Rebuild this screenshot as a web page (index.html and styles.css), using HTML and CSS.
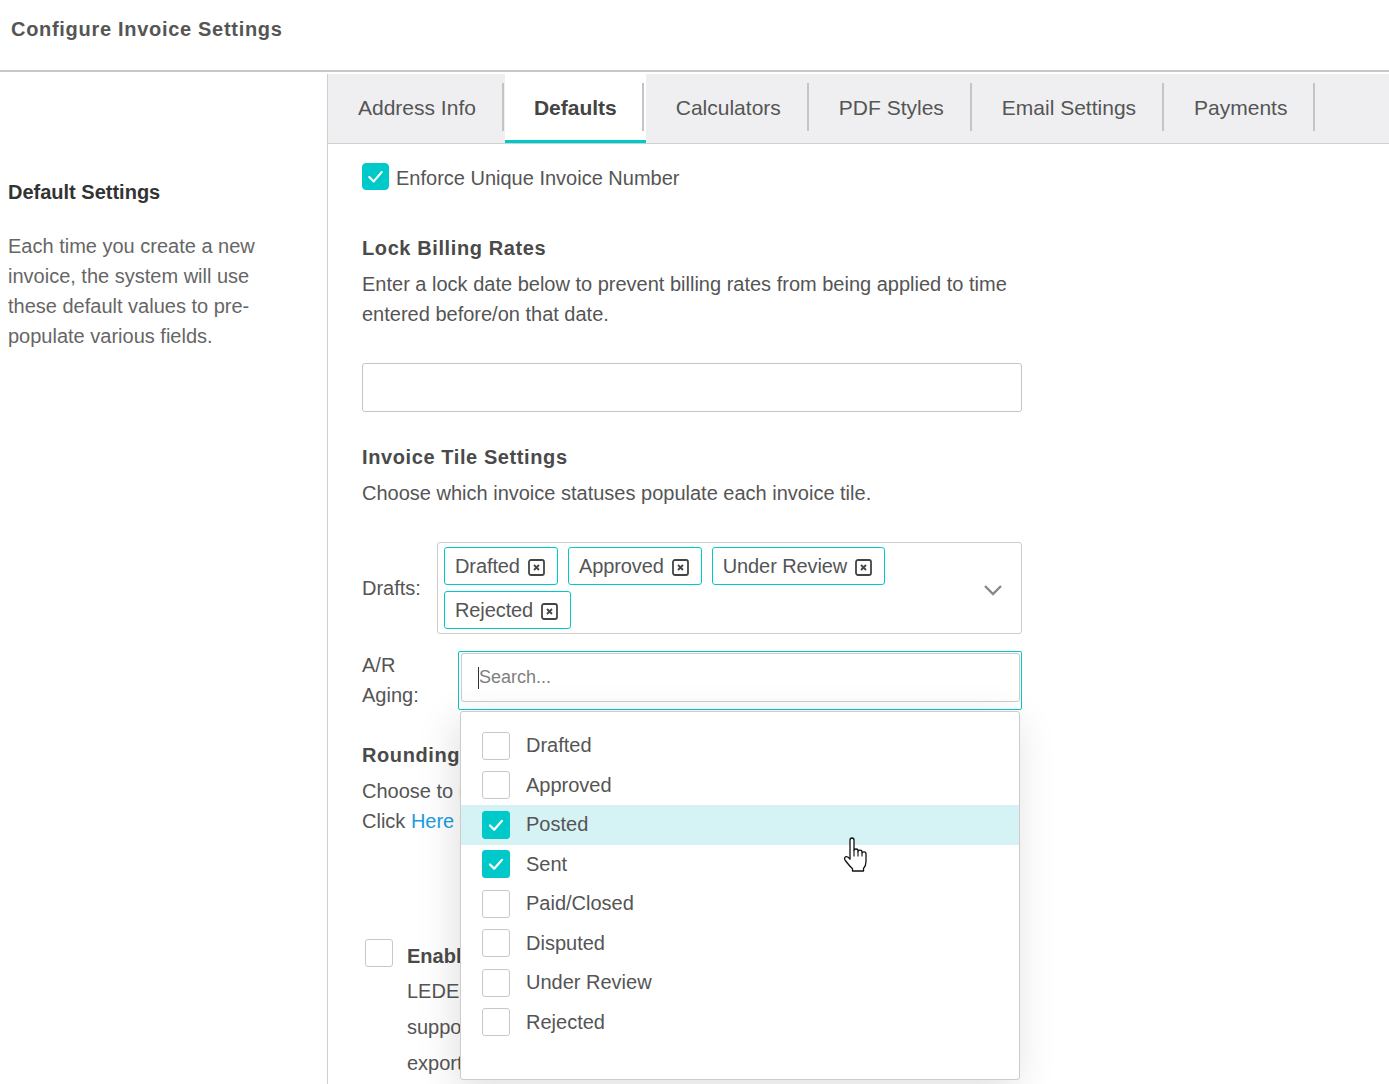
FILE: index.html
```html
<!DOCTYPE html>
<html lang="en">
<head>
<meta charset="utf-8">
<title>Configure Invoice Settings</title>
<link rel="stylesheet" href="styles.css">
</head>
<body>
<header class="page-header">
  <h1 class="page-title">Configure Invoice Settings</h1>
</header>
<div class="layout">
  <aside class="sidebar">
    <h2 class="side-title">Default Settings</h2>
    <p class="side-text">Each time you create a new invoice, the system will use these default values to pre-populate various fields.</p>
  </aside>
  <main class="main">
    <nav class="tabs">
      <div class="tab">Address Info</div><span class="sep"></span>
      <div class="tab active">Defaults<span class="sep sep-inner"></span></div>
      <div class="tab">Calculators</div><span class="sep"></span>
      <div class="tab">PDF Styles</div><span class="sep"></span>
      <div class="tab">Email Settings</div><span class="sep"></span>
      <div class="tab">Payments</div><span class="sep"></span>
    </nav>
    <div class="content">
      <label class="check-row">
        <span class="checkbox checked big"><svg viewBox="0 0 28 28"><polyline points="7,14.5 12,19.5 21,9"/></svg></span>
        <span class="check-label">Enforce Unique Invoice Number</span>
      </label>

      <h3 class="section-title first">Lock Billing Rates</h3>
      <p class="section-text">Enter a lock date below to prevent billing rates from being applied to time entered before/on that date.</p>
      <div class="text-input"></div>

      <h3 class="section-title">Invoice Tile Settings</h3>
      <p class="section-text">Choose which invoice statuses populate each invoice tile.</p>

      <div class="field-row drafts-row">
        <span class="field-label">Drafts:</span>
        <div class="multiselect">
          <div class="tags">
            <span class="tag">Drafted<svg class="tag-x" viewBox="0 0 17 17"><rect x="1" y="1" width="15" height="15" rx="2"/><path d="M6 6 L11 11 M11 6 L6 11"/></svg></span>
            <span class="tag">Approved<svg class="tag-x" viewBox="0 0 17 17"><rect x="1" y="1" width="15" height="15" rx="2"/><path d="M6 6 L11 11 M11 6 L6 11"/></svg></span>
            <span class="tag">Under Review<svg class="tag-x" viewBox="0 0 17 17"><rect x="1" y="1" width="15" height="15" rx="2"/><path d="M6 6 L11 11 M11 6 L6 11"/></svg></span>
            <span class="tag">Rejected<svg class="tag-x" viewBox="0 0 17 17"><rect x="1" y="1" width="15" height="15" rx="2"/><path d="M6 6 L11 11 M11 6 L6 11"/></svg></span>
          </div>
          <svg class="chevron" viewBox="0 0 20 12"><polyline points="2,2 10,10 18,2"/></svg>
        </div>
      </div>

      <div class="field-row ar-row">
        <span class="field-label">A/R Aging:</span>
        <div class="ar-select">
          <div class="search-box"><span class="caret"></span><span class="placeholder">Search...</span></div>
          <div class="dropdown">
            <div class="opt"><span class="checkbox"></span>Drafted</div>
            <div class="opt"><span class="checkbox"></span>Approved</div>
            <div class="opt hover"><span class="checkbox checked"><svg viewBox="0 0 28 28"><polyline points="7.5,14.5 12,19 20.5,9.5"/></svg></span>Posted</div>
            <div class="opt"><span class="checkbox checked"><svg viewBox="0 0 28 28"><polyline points="7.5,14.5 12,19 20.5,9.5"/></svg></span>Sent</div>
            <div class="opt"><span class="checkbox"></span>Paid/Closed</div>
            <div class="opt"><span class="checkbox"></span>Disputed</div>
            <div class="opt"><span class="checkbox"></span>Under Review</div>
            <div class="opt"><span class="checkbox"></span>Rejected</div>
            <svg class="pointer" viewBox="0 0 24 35"><path class="hand" d="M7 3.2 Q7 1 9 1 Q11 1 11 3.2 L11 13.5 Q11 12 13 12 Q15 12 15 13.8 L15 14.8 Q15 13.2 17 13.2 Q19 13.2 19 15 L19 16.2 Q19 14.8 21 14.8 Q23 14.8 23 16.8 L23 24.5 Q23 29 20.5 31.5 L20.5 34 L9.5 34 L9.5 31.8 Q6.5 29 2.3 23.5 Q0.6 21 2.6 19.8 Q4.6 18.8 7 22.2 Z"/><path class="hand-lines" d="M11 13.5 L11 19.5 M15 14.8 L15 19.5 M19 16.2 L19 19.5"/></svg>
          </div>
        </div>
      </div>

      <h3 class="section-title">Rounding Settings</h3>
      <p class="section-text">Choose to round time entries to the nearest increment.<br>Click <a class="link" href="#">Here</a> to learn more about rounding.</p>

      <div class="ledes-row">
        <span class="checkbox ledes-box"></span>
        <div class="ledes-body">
          <div class="ledes-title">Enable LEDES Billing</div>
          <p class="ledes-text">LEDES billing is an electronic invoice format<br>supported by many legal departments. Enable this to<br>export invoices in LEDES format.</p>
        </div>
      </div>
    </div>
  </main>
</div>
</body>
</html>
```

FILE: styles.css
```css
* {
  box-sizing: border-box;
  margin: 0;
  padding: 0;
}

html, body {
  height: 100%;
}

body {
  font-family: "Liberation Sans", Arial, sans-serif;
  font-size: 20px;
  color: #555;
  background: #fff;
  overflow: hidden;
}

.page-header {
  height: 72px;
  border-bottom: 2px solid #c8c8c8;
  padding: 17px 0 0 11px;
}

.page-title {
  font-size: 20px;
  line-height: 24px;
  font-weight: bold;
  letter-spacing: 0.7px;
  color: #555;
}

.layout {
  display: flex;
  margin-top: 2px;
  height: calc(100vh - 74px);
}

.sidebar {
  width: 328px;
  flex: none;
  border-right: 1px solid #cfcfcf;
  padding: 103px 0 0 8px;
}

.side-title {
  font-size: 20px;
  line-height: 30px;
  font-weight: bold;
  color: #333;
}

.side-text {
  margin-top: 24px;
  line-height: 30px;
  color: #666;
  max-width: 272px;
}

.main {
  flex: 1;
  min-width: 0;
}

/* Tabs */
.tabs {
  display: flex;
  height: 70px;
  background: #efeff1;
  border-bottom: 1px solid #cfcfcf;
}

.tab {
  display: flex;
  align-items: center;
  height: 67px;
  padding: 0 26px 0 30px;
  font-size: 21px;
  color: #555;
  white-space: nowrap;
}

.tab.active {
  height: 69px;
  padding: 0 2px 2px 29px;
  background: #fff;
  font-weight: bold;
  color: #444;
  margin-left: 1px;
  box-shadow: inset 0 -3px 0 #00c9c9;
}

.sep {
  flex: none;
  width: 2px;
  height: 48px;
  margin-top: 9px;
  background: #c4c4c4;
}

.sep-inner {
  align-self: flex-start;
  margin-left: 25px;
}

/* Content */
.content {
  width: 694px;
  padding: 0 0 0 34px;
}

.check-row {
  display: flex;
  align-items: center;
  height: 30px;
  margin-top: 18px;
}

.check-label {
  margin-left: 7px;
  line-height: 30px;
  margin-top: 1px;
}

.checkbox {
  flex: none;
  display: inline-flex;
  width: 28px;
  height: 28px;
  border: 1px solid #c8c8c8;
  border-radius: 3px;
  background: #fff;
}

.checkbox.big {
  width: 27px;
  height: 27px;
  border-radius: 4px;
  margin-top: -2px;
}

.checkbox.checked {
  background: #00c9c9;
  border-color: #00c9c9;
}

.checkbox svg {
  width: 100%;
  height: 100%;
}

.checkbox polyline {
  fill: none;
  stroke: #fff;
  stroke-width: 2.4;
  stroke-linecap: round;
  stroke-linejoin: round;
}

.section-title {
  font-size: 20px;
  line-height: 30px;
  font-weight: bold;
  letter-spacing: 0.6px;
  color: #4a4a4a;
  margin-top: 30px;
}

.section-title.first {
  margin-top: 41px;
}

.section-text {
  margin-top: 6px;
  line-height: 30px;
}

.link {
  color: #1a9de0;
  text-decoration: none;
}

.text-input {
  margin-top: 34px;
  height: 49px;
  border: 1px solid #c4c4c4;
  border-radius: 3px;
}

.field-row {
  display: flex;
}

.field-label {
  flex: none;
  width: 75px;
  line-height: 30px;
}

.drafts-row {
  margin-top: 34px;
  align-items: center;
}

.multiselect {
  flex: 1;
  display: flex;
  align-items: center;
  border: 1px solid #ccc;
  border-radius: 3px;
  padding: 4px 18px 4px 6px;
}

.tags {
  flex: 1;
  display: flex;
  flex-wrap: wrap;
  gap: 6px 10px;
}

.tag {
  display: inline-flex;
  align-items: center;
  height: 38px;
  padding: 0 12px 0 10px;
  border: 1px solid #00c9c9;
  border-radius: 3px;
  color: #555;
  white-space: nowrap;
  letter-spacing: -0.1px;
}

.tag-x {
  width: 17px;
  height: 17px;
  margin-left: 8px;
  margin-top: 2px;
}

.tag-x rect {
  fill: none;
  stroke: #444;
  stroke-width: 1.8;
}

.tag-x path {
  stroke: #444;
  stroke-width: 1.8;
}

.chevron {
  width: 20px;
  height: 12px;
  margin-top: 4px;
}

.chevron polyline {
  fill: none;
  stroke: #888;
  stroke-width: 2.4;
}

.ar-row {
  margin-top: 17px;
  align-items: flex-start;
}

.ar-row .field-label {
  margin-top: -1px;
}

.ar-select {
  position: relative;
  flex: 1;
  margin-left: 21px;
  border: 1px solid #00c9c9;
  border-radius: 2px;
  padding: 1px 1px 7px 2px;
}

.search-box {
  display: flex;
  align-items: center;
  height: 49px;
  border: 1px solid #ccc;
  border-radius: 3px;
  padding-left: 16px;
  font-size: 18px;
}

.caret {
  width: 1px;
  height: 22px;
  background: #333;
}

.placeholder {
  color: #808080;
}

.dropdown {
  position: absolute;
  top: 59px;
  left: 1px;
  width: 560px;
  height: 369px;
  background: #fff;
  border: 1px solid #ccc;
  border-radius: 3px;
  padding-top: 14px;
  box-shadow: -4px 10px 40px rgba(0, 0, 0, 0.13);
  z-index: 5;
}

.opt {
  display: flex;
  align-items: center;
  gap: 16px;
  height: 39.5px;
  padding-left: 21px;
  color: #555;
}

.opt.hover {
  background: #d5f3f5;
}

.pointer {
  position: absolute;
  left: 382px;
  top: 125px;
  width: 24px;
  height: 35px;
}

.pointer .hand {
  fill: #fff;
  stroke: #111;
  stroke-width: 1.3;
  stroke-linejoin: round;
}

.pointer .hand-lines {
  fill: none;
  stroke: #111;
  stroke-width: 1.1;
}

.ledes-row {
  display: flex;
  margin-top: 103px;
}

.ledes-box {
  margin-left: 3px;
}

.ledes-body {
  margin-left: 14px;
}

.ledes-title {
  margin-top: 2px;
  line-height: 30px;
  font-weight: bold;
  color: #4a4a4a;
}

.ledes-text {
  margin-top: 2px;
  line-height: 36px;
}
```
